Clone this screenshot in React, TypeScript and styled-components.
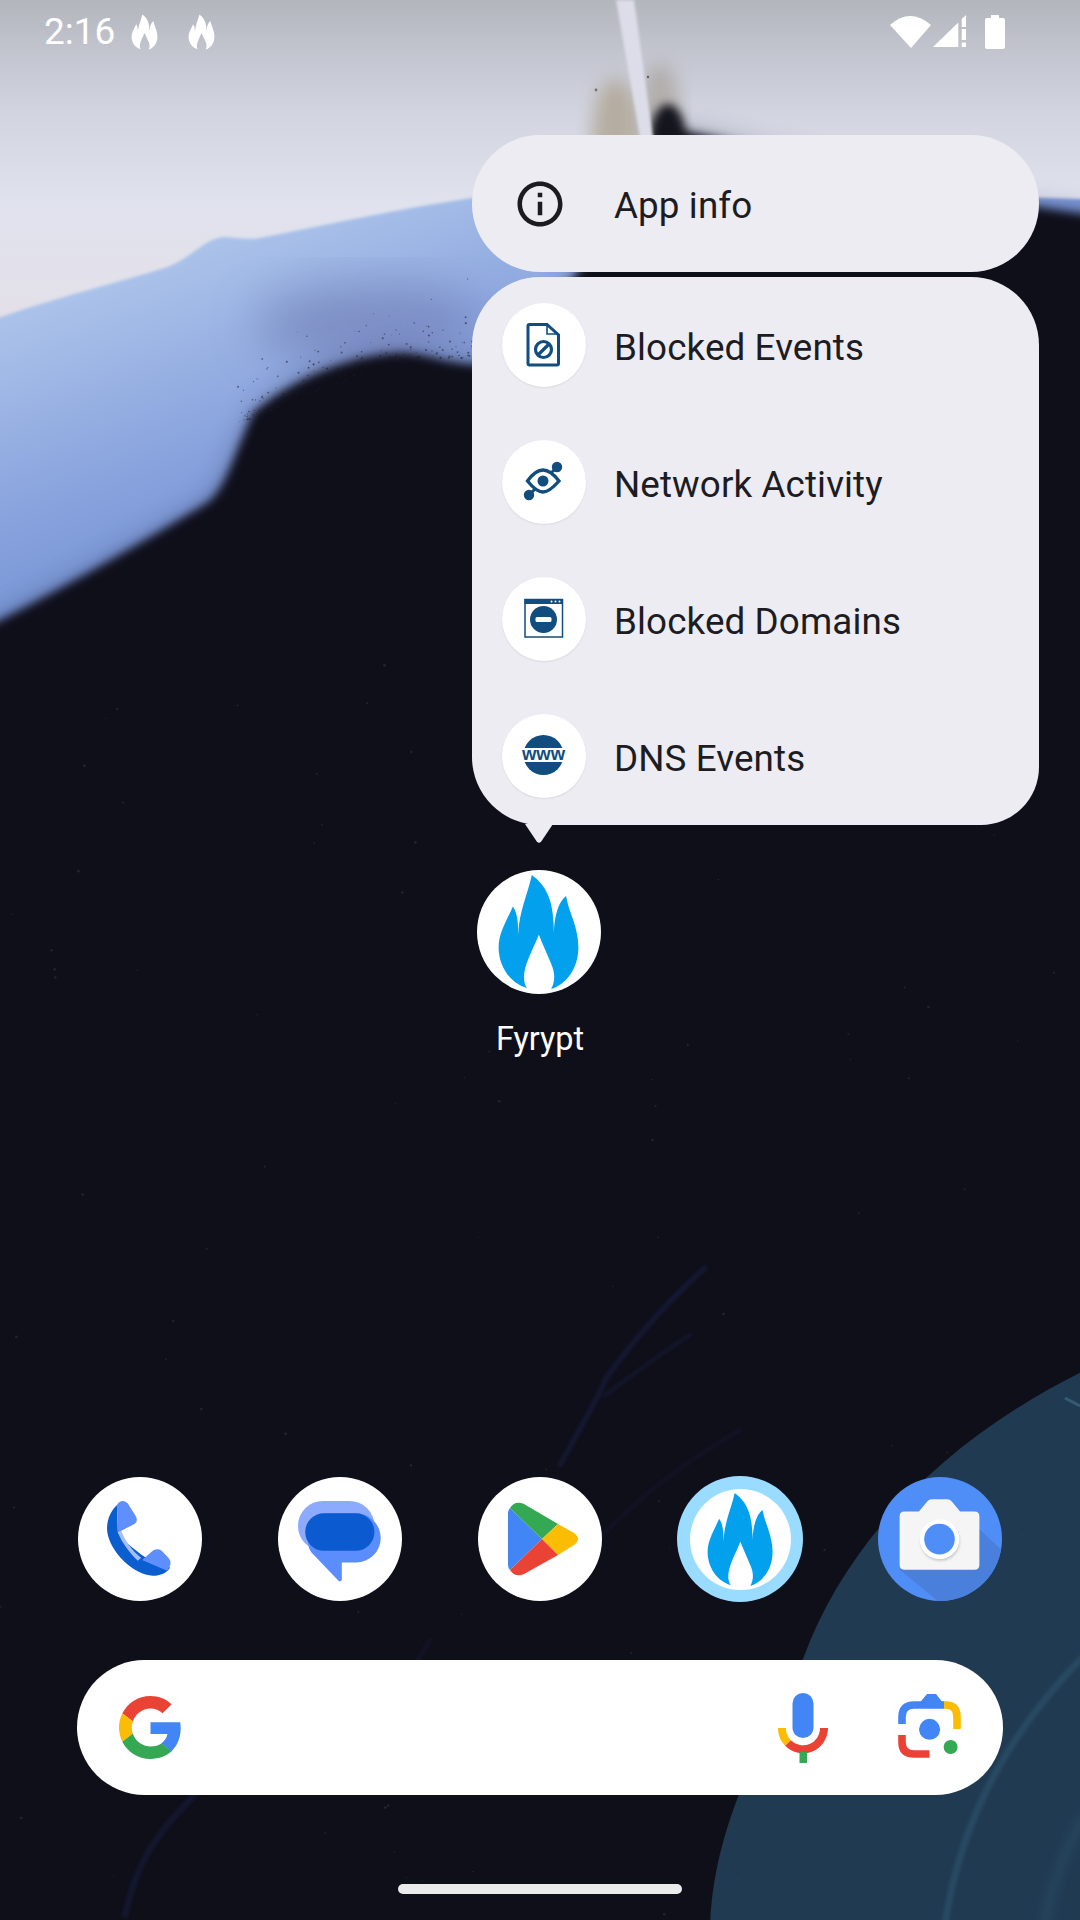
import React from "react";
import styled, { createGlobalStyle } from "styled-components";

const GlobalStyle = createGlobalStyle`
  html, body {
    margin: 0;
    padding: 0;
    background: #0f0f1a;
  }
  * {
    box-sizing: border-box;
  }
`;

const FLAME =
  "M165 15 C205 45 232 85 231 190 C233 135 245 95 268 78 C275 125 305 170 305 232 C305 300 265 345 223 358 C235 335 236 310 222 280 C212 255 198 225 186 195 C174 225 158 255 148 285 C138 315 140 340 150 355 C100 340 65 290 65 232 C65 190 90 150 108 110 C122 130 124 160 124 195 C126 125 152 75 165 15 Z";

const Screen = styled.div`
  position: relative;
  width: 1080px;
  height: 1920px;
  overflow: hidden;
  display: flex;
  flex-direction: column;
  font-family: Roboto, "Noto Sans", sans-serif;
`;

const WallpaperArt = styled.svg`
  position: absolute;
  inset: 0;
  width: 1080px;
  height: 1920px;
`;

const StatusBar = styled.div`
  position: relative;
  display: flex;
  align-items: center;
  justify-content: space-between;
  height: 64px;
  padding: 0 75px 0 44px;
  color: #fff;
`;

const StatusLeft = styled.div`
  display: flex;
  align-items: center;
`;

const Clock = styled.span`
  font-size: 37px;
  line-height: 64px;
  width: 87px;
`;

const StatusFlame = styled.svg`
  width: 27px;
  height: 36px;
  margin-right: 30px;
`;

const StatusRight = styled.div`
  display: flex;
  align-items: center;
  gap: 19px;
`;

const Menu = styled.div`
  position: relative;
  display: flex;
  flex-direction: column;
  gap: 5px;
  width: 567px;
  margin: 71px 0 0 472px;
`;

const MenuPanel = styled.div<{ $arrow?: boolean }>`
  position: relative;
  background: #edecf3;
  border-radius: 68px;
  ${(p) =>
    p.$arrow &&
    `border-bottom-right-radius: 58px;
     &::after {
       content: "";
       position: absolute;
       left: 53px;
       bottom: -18px;
       width: 28px;
       height: 19px;
       background: #edecf3;
       clip-path: polygon(0 0, 100% 0, 58% 92%, 50% 100%, 42% 92%);
     }`}
`;

const MenuRow = styled.div`
  display: flex;
  align-items: center;
  height: 137px;
`;

const IconSlot = styled.div<{ $inset: number }>`
  display: flex;
  align-items: center;
  width: 142px;
  flex: none;
  padding-left: ${(p) => p.$inset}px;
`;

const ShortcutCircle = styled.div`
  width: 84px;
  height: 84px;
  margin-top: -1px;
  border-radius: 50%;
  background: #fff;
  box-shadow: 0 1px 2px rgba(0, 0, 0, 0.08);
`;

const ShortcutSvg = styled.svg`
  display: block;
  width: 84px;
  height: 84px;
`;

const MenuLabel = styled.span`
  padding-top: 5px;
  font-size: 36.8px;
  line-height: 40px;
  color: #1c1c22;
  letter-spacing: 0.1px;
`;

const AppShortcut = styled.div`
  position: relative;
  display: flex;
  flex-direction: column;
  align-items: center;
  width: 200px;
  margin: 45px 0 0 439px;
`;

const AppLabel = styled.span`
  margin: 25px 0 0 2px;
  font-size: 32.4px;
  line-height: 40px;
  color: #fff;
`;

const Bottom = styled.div`
  position: relative;
  margin-top: auto;
  display: flex;
  flex-direction: column;
`;

const Dock = styled.div`
  display: grid;
  grid-template-columns: repeat(5, 200px);
  justify-items: center;
  align-items: center;
  padding: 0 40px;
`;

const IconCircle = styled.div<{ $bg: string; $size?: number }>`
  display: flex;
  align-items: center;
  justify-content: center;
  width: ${(p) => p.$size ?? 124}px;
  height: ${(p) => p.$size ?? 124}px;
  border-radius: 50%;
  background: ${(p) => p.$bg};
  overflow: hidden;
`;

const DockSvg = styled.svg`
  display: block;
  width: 124px;
  height: 124px;
`;

const RingInner = styled.div`
  width: 101px;
  height: 101px;
  border-radius: 50%;
  background: #fff;
`;

const RingFlame = styled.svg`
  display: block;
  width: 101px;
  height: 101px;
`;

const SearchBar = styled.div`
  display: flex;
  align-items: center;
  height: 135px;
  margin: 58px 77px 0;
  padding: 0 37px 0 42px;
  background: #fff;
  border-radius: 68px;
`;

const GoogleG = styled.svg`
  width: 63px;
  height: 63px;
`;

const Mic = styled.svg`
  width: 56px;
  height: 76px;
  margin-left: auto;
`;

const Lens = styled.svg`
  width: 72px;
  height: 72px;
  margin-left: 63px;
`;

const HomeBar = styled.div`
  width: 284px;
  height: 10px;
  margin: 89px auto 26px;
  border-radius: 5px;
  background: #ebebeb;
`;

function seeded(seed: number) {
  let s = seed;
  return () => {
    s = (s * 16807) % 2147483647;
    return s / 2147483647;
  };
}

const darkSpecks = (() => {
  const r = seeded(41);
  return Array.from({ length: 190 }, () => {
    const x = 238 + r() * 235;
    const top = x < 400 ? 420 - (x - 238) * 0.41 : 354;
    return { x, y: top - r() * r() * r() * 120 + 4, s: 0.4 + r() * 0.7 };
  });
})();

const stars = (() => {
  const r = seeded(97);
  return Array.from({ length: 110 }, () => ({
    x: r() * 1080,
    y: 620 + r() * 1300,
    s: 0.6 + r() * 0.8,
  }));
})();

const Soft = ({ id, d }: { id: string; d: number }) => (
  <filter id={id} x="-30%" y="-30%" width="160%" height="160%">
    <feGaussianBlur stdDeviation={d} colorInterpolationFilters="sRGB" />
  </filter>
);

const DARK_EDGE =
  "M-30 636 C60 590 130 550 207 503 C225 490 232 460 253 413 C290 380 350 355 400 353 C425 353 440 362 475 365 C520 340 560 300 590 255 C620 200 650 140 675 130 C720 135 900 190 1110 218 L1110 1950 L-30 1950 Z";

const Wallpaper = () => (
  <WallpaperArt viewBox="0 0 1080 1920">
    <defs>
      <linearGradient id="sky" x1="0" y1="0" x2="0" y2="1">
        <stop offset="0" stopColor="#b4b6bd" />
        <stop offset="0.12" stopColor="#bfc1cb" />
        <stop offset="0.33" stopColor="#d2d4e0" />
        <stop offset="0.6" stopColor="#e0e2ee" />
        <stop offset="0.85" stopColor="#e3e1ea" />
        <stop offset="1" stopColor="#e2dde4" />
      </linearGradient>
      <linearGradient id="band" gradientUnits="userSpaceOnUse" x1="120" y1="280" x2="240" y2="600">
        <stop offset="0" stopColor="#aac2e9" />
        <stop offset="0.55" stopColor="#88a2dd" />
        <stop offset="1" stopColor="#6e8dd0" />
      </linearGradient>
      <Soft id="soft2" d={1.5} />
      <Soft id="soft5" d={5} />
      <Soft id="soft9" d={9} />
      <Soft id="soft14" d={14} />
      <Soft id="soft24" d={24} />
    </defs>
    <rect width="1080" height="340" fill="url(#sky)" />
    <path
      d="M-30 328 C60 295 130 280 170 266 C195 255 205 238 225 237 C240 238 250 240 260 238 C340 222 420 205 480 197 C620 190 800 190 1110 200 L1110 700 L-30 700 Z"
      fill="url(#band)"
      filter="url(#soft2)"
    />
    <ellipse cx="370" cy="325" rx="115" ry="42" fill="#6a76ae" opacity="0.55" filter="url(#soft24)" />
    <path d={DARK_EDGE} fill="#2a2f52" opacity="0.4" filter="url(#soft14)" />
    <path d={DARK_EDGE} fill="#0f0f1a" filter="url(#soft5)" />
    <rect y="700" width="1080" height="1220" fill="#0f0f1a" />
    {darkSpecks.map((d, i) => (
      <circle key={i} cx={d.x} cy={d.y} r={d.s} fill="#1b1b2c" opacity="0.55" />
    ))}
    <ellipse cx="616" cy="135" rx="24" ry="56" fill="#a89c86" opacity="0.7" filter="url(#soft9)" />
    <ellipse cx="660" cy="112" rx="20" ry="48" fill="#9c9486" opacity="0.55" filter="url(#soft9)" />
    <ellipse cx="668" cy="140" rx="18" ry="36" fill="#15151e" filter="url(#soft5)" />
    <path d="M616 0 L634 0 L653 138 L640 138 Z" fill="#dcdde8" filter="url(#soft2)" />
    <circle cx="596" cy="90" r="1.4" fill="#77716c" />
    <circle cx="648" cy="77" r="1.2" fill="#66625f" />
    <path
      d="M1090 1368 C960 1430 850 1530 803 1659 C770 1730 712 1820 710 1930 L1090 1930 Z"
      fill="#203a52"
    />
    <path d="M1085 1655 C1010 1730 960 1820 945 1925" stroke="#2c5069" strokeWidth="7" fill="none" opacity="0.7" filter="url(#soft2)" />
    <path d="M1085 1815 C1065 1850 1050 1890 1045 1925" stroke="#2c5069" strokeWidth="10" fill="none" opacity="0.5" filter="url(#soft5)" />
    <path d="M1065 1398 L1080 1406" stroke="#3f6a82" strokeWidth="3" opacity="0.7" />
    <g fill="none" stroke="#1a2146" strokeLinecap="round" filter="url(#soft2)">
      <path d="M560 1465 C590 1410 600 1395 605 1380 C640 1330 680 1290 705 1268" strokeWidth="5" opacity="0.55" />
      <path d="M605 1395 C640 1370 665 1350 690 1335" strokeWidth="4" opacity="0.4" />
      <path d="M560 1580 C640 1490 690 1460 740 1430" strokeWidth="4" opacity="0.28" />
      <path d="M125 1915 C135 1870 150 1840 190 1800 C205 1780 215 1760 230 1750" strokeWidth="6" opacity="0.45" />
      <path d="M330 1790 C360 1750 400 1690 430 1640" strokeWidth="4" opacity="0.3" />
    </g>
    {stars.map((d, i) => (
      <circle key={i} cx={d.x} cy={d.y} r={d.s} fill="#3a3d50" opacity="0.45" />
    ))}
  </WallpaperArt>
);

const InfoIcon = () => (
  <svg width="54" height="54" viewBox="0 0 24 24" fill="#1b1b20">
    <path d="M11 7h2v2h-2zm0 4h2v6h-2zm1-9C6.48 2 2 6.48 2 12s4.48 10 10 10 10-4.48 10-10S17.52 2 12 2zm0 18c-4.41 0-8-3.59-8-8s3.59-8 8-8 8 3.59 8 8-3.59 8-8 8z" />
  </svg>
);

const NAVY = "#114d7e";

const BlockedEvents = () => (
  <ShortcutSvg viewBox="0 0 84 84">
    <path
      d="M27.5 21.5 H45 L56.5 32 V60.5 Q56.5 62 55 62 H27.5 Q26 62 26 60.5 V23 Q26 21.5 27.5 21.5 Z"
      fill="none"
      stroke={NAVY}
      strokeWidth="3"
    />
    <path d="M45 21 V31 H56" fill="none" stroke={NAVY} strokeWidth="1.6" />
    <circle cx="41.5" cy="46.5" r="8" fill="none" stroke={NAVY} strokeWidth="3.2" />
    <path d="M36 52 L47 41" stroke={NAVY} strokeWidth="3.2" />
  </ShortcutSvg>
);

const NetworkActivity = () => (
  <ShortcutSvg viewBox="0 0 84 84">
    <path d="M27 55 L55 27" stroke={NAVY} strokeWidth="3" />
    <path
      d="M25.5 41 C32 32 38 30 41 30 C44 30 50 32 57 41 C50 49 44 52 41 52 C38 52 32 49 25.5 41 Z"
      fill="#fff"
      stroke={NAVY}
      strokeWidth="3.4"
    />
    <circle cx="41" cy="41" r="5.5" fill={NAVY} />
    <circle cx="55" cy="27" r="5.2" fill={NAVY} />
    <circle cx="27" cy="55" r="5.2" fill={NAVY} />
  </ShortcutSvg>
);

const BlockedDomains = () => (
  <ShortcutSvg viewBox="0 0 84 84">
    <rect x="23" y="22.5" width="37.5" height="37.5" fill="#fff" stroke={NAVY} strokeWidth="1.5" />
    <rect x="22.5" y="22" width="38.5" height="5" fill={NAVY} />
    <circle cx="49.5" cy="24.5" r="1" fill="#fff" />
    <circle cx="53.5" cy="24.5" r="1" fill="#fff" />
    <circle cx="57.5" cy="24.5" r="1" fill="#fff" />
    <circle cx="41.5" cy="42.5" r="13.5" fill={NAVY} />
    <rect x="33.5" y="40" width="16" height="5" rx="1.5" fill="#fff" />
  </ShortcutSvg>
);

const DnsEvents = () => (
  <ShortcutSvg viewBox="0 0 84 84">
    <circle cx="41.5" cy="41" r="20" fill={NAVY} />
    <rect x="18" y="34" width="47" height="14" fill="#fff" />
    <text
      x="41.5"
      y="46"
      textAnchor="middle"
      fontFamily="'Liberation Sans', sans-serif"
      fontWeight="700"
      fontSize="19"
      textLength="43"
      lengthAdjust="spacingAndGlyphs"
      fill={NAVY}
    >
      www
    </text>
  </ShortcutSvg>
);

const Flame = () => <path d={FLAME} fill="#03a0ee" />;

const PhoneIcon = () => (
  <DockSvg viewBox="0 0 373 373">
    <path
      d="M117 84 C95 105 85 135 88 165 C95 225 170 297 225 297 C248 297 268 288 277 272 L200 240 C165 215 135 190 120 167 Z"
      fill="#0b5ed0"
    />
    <path d="M117 84 C125 70 140 68 150 80 L174 118 C180 130 176 138 168 142 L120 167 Z" fill="#5f8fff" />
    <path d="M120 167 L130 162 C142 192 162 222 190 243 L180 252 C155 228 132 198 120 167 Z" fill="#a4beff" />
    <path d="M193 250 L222 224 C232 215 245 215 253 223 L272 243 C282 254 280 268 268 282 Z" fill="#5f8fff" />
  </DockSvg>
);

const MessagesIcon = () => (
  <DockSvg viewBox="0 0 373 373">
    <rect x="60" y="72" width="230" height="150" rx="75" fill="#8cabff" />
    <path
      d="M157 109 H235 A74 74 0 0 1 235 257 H192 V308 Q190 317 182 312 L100 226 C75 190 95 109 157 109 Z"
      fill="#5b8dff"
    />
    <rect x="82" y="109" width="208" height="113" rx="56" fill="#0b5ad0" />
  </DockSvg>
);

const PlayIcon = () => (
  <DockSvg viewBox="0 0 124 124">
    <path d="M32 31 L64 62 L32 93 Q30 91 30 88 V36 Q30 33 32 31 Z" fill="#4285f4" />
    <path d="M32 31 Q37 23 46 27 L80 47 L64 62 Z" fill="#34a853" />
    <path d="M80 47 L96 56 Q104 62 96 68 L80 78 L64 62 Z" fill="#fbbc04" />
    <path d="M32 93 L64 62 L80 78 L46 97 Q37 101 32 93 Z" fill="#ea4335" />
  </DockSvg>
);

const CameraIcon = () => (
  <DockSvg viewBox="0 0 373 373">
    <defs>
      <filter id="lensShade">
        <feGaussianBlur stdDeviation="4" colorInterpolationFilters="sRGB" />
      </filter>
    </defs>
    <path d="M247 104 L373 220 V373 H180 L65 279 Z" fill="#4a7fdc" />
    <path
      d="M80 104 H123 L148 74 Q153 67 162 67 H208 Q217 67 222 74 L247 104 H290 Q305 104 305 119 V264 Q305 279 290 279 H80 Q65 279 65 264 V119 Q65 104 80 104 Z"
      fill="#f5f5f5"
    />
    <circle cx="187" cy="193" r="60" fill="#000" opacity="0.16" filter="url(#lensShade)" />
    <circle cx="185" cy="187" r="60" fill="#fff" />
    <circle cx="185" cy="187" r="46" fill="#4f8ef7" />
  </DockSvg>
);

const App = () => {
  const shortcuts = [
    { label: "Blocked Events", icon: <BlockedEvents /> },
    { label: "Network Activity", icon: <NetworkActivity /> },
    { label: "Blocked Domains", icon: <BlockedDomains /> },
    { label: "DNS Events", icon: <DnsEvents /> },
  ];

  return (
    <Screen>
      <GlobalStyle />
      <Wallpaper />

      <StatusBar>
        <StatusLeft>
          <Clock>2:16</Clock>
          <StatusFlame viewBox="60 10 250 352" preserveAspectRatio="none">
            <path d={FLAME} fill="#fff" />
          </StatusFlame>
          <StatusFlame viewBox="60 10 250 352" preserveAspectRatio="none">
            <path d={FLAME} fill="#fff" />
          </StatusFlame>
        </StatusLeft>
        <StatusRight>
          <svg width="76" height="34" viewBox="0 0 76 34" fill="#fff">
            <path d="M0 10 Q20 -8 41 10 L21 33 Z" />
            <path d="M43 32 L68.3 7.6 V32 Z" />
            <path d="M71.7 4 L76 0 V12 H71.7 Z" />
            <rect x="71.7" y="14" width="4.3" height="11" />
            <rect x="71.7" y="27.5" width="4.3" height="4.5" />
          </svg>
          <svg width="20" height="34" viewBox="0 0 20 34" fill="#fff">
            <path d="M6 0 H14 V3 H18 Q20 3 20 5 V32 Q20 34 18 34 H2 Q0 34 0 32 V5 Q0 3 2 3 H6 Z" />
          </svg>
        </StatusRight>
      </StatusBar>

      <Menu>
        <MenuPanel>
          <MenuRow>
            <IconSlot $inset={41}>
              <InfoIcon />
            </IconSlot>
            <MenuLabel>App info</MenuLabel>
          </MenuRow>
        </MenuPanel>
        <MenuPanel $arrow>
          {shortcuts.map((s) => (
            <MenuRow key={s.label}>
              <IconSlot $inset={30}>
                <ShortcutCircle>{s.icon}</ShortcutCircle>
              </IconSlot>
              <MenuLabel>{s.label}</MenuLabel>
            </MenuRow>
          ))}
        </MenuPanel>
      </Menu>

      <AppShortcut>
        <IconCircle $bg="#fff">
          <DockSvg viewBox="0 0 373 373">
            <Flame />
          </DockSvg>
        </IconCircle>
        <AppLabel>Fyrypt</AppLabel>
      </AppShortcut>

      <Bottom>
        <Dock>
          <IconCircle $bg="#fff">
            <PhoneIcon />
          </IconCircle>
          <IconCircle $bg="#fff">
            <MessagesIcon />
          </IconCircle>
          <IconCircle $bg="#fff">
            <PlayIcon />
          </IconCircle>
          <IconCircle $bg="#9adcff" $size={126}>
            <RingInner>
              <RingFlame viewBox="0 0 373 373">
                <Flame />
              </RingFlame>
            </RingInner>
          </IconCircle>
          <IconCircle $bg="#4f8ef7">
            <CameraIcon />
          </IconCircle>
        </Dock>

        <SearchBar>
          <GoogleG viewBox="0 0 48 48">
            <path fill="#EA4335" d="M24 9.5c3.54 0 6.71 1.22 9.21 3.6l6.85-6.85C35.9 2.38 30.47 0 24 0 14.62 0 6.51 5.38 2.56 13.22l7.98 6.19C12.43 13.72 17.74 9.5 24 9.5z" />
            <path fill="#4285F4" d="M46.98 24.55c0-1.57-.15-3.09-.38-4.55H24v9.02h12.94c-.58 2.96-2.26 5.48-4.78 7.18l7.73 6c4.51-4.18 7.09-10.36 7.09-17.65z" />
            <path fill="#FBBC05" d="M10.53 28.59c-.48-1.45-.76-2.99-.76-4.59s.27-3.14.76-4.59l-7.98-6.19C.92 16.46 0 20.12 0 24c0 3.88.92 7.54 2.56 10.78l7.97-6.19z" />
            <path fill="#34A853" d="M24 48c6.48 0 11.93-2.13 16.07-5.81l-7.73-6c-2.15 1.45-4.92 2.3-8.34 2.3-6.26 0-11.57-4.22-13.47-9.91l-7.98 6.19C6.51 42.62 14.62 48 24 48z" />
          </GoogleG>
          <Mic viewBox="0 0 56 76">
            <rect x="17.5" y="3" width="21" height="45" rx="10.5" fill="#4285f4" />
            <path d="M7 38 A21 21 0 0 0 13 53" fill="none" stroke="#fbbc04" strokeWidth="8" />
            <path d="M13 53 A21 21 0 0 0 49 38" fill="none" stroke="#ea4335" strokeWidth="8" />
            <rect x="24.5" y="62" width="7.5" height="11" fill="#34a853" />
          </Mic>
          <Lens viewBox="0 0 72 72">
            <path d="M8 32 V25 Q8 13 20 13 H50" fill="none" stroke="#4285f4" strokeWidth="7.6" />
            <path d="M23 14 L33 2 H42 L53 16 Z" fill="#4285f4" />
            <path d="M50 13 H52 Q63 13 63 25 V37" fill="none" stroke="#fbbc04" strokeWidth="7.6" />
            <path d="M8 43 V50 Q8 62 20 62 H35.5" fill="none" stroke="#ea4335" strokeWidth="7.6" />
            <circle cx="35.6" cy="37.3" r="10.5" fill="#4285f4" />
            <circle cx="56.6" cy="55" r="7" fill="#34a853" />
          </Lens>
        </SearchBar>

        <HomeBar />
      </Bottom>
    </Screen>
  );
};

export default App;
